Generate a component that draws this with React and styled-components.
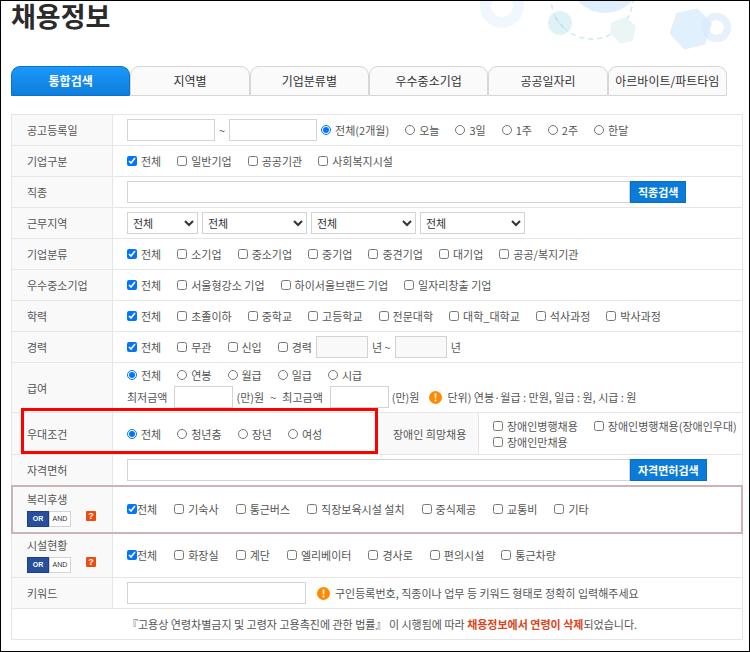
import { useState } from "react";
import styled, { createGlobalStyle, css } from "styled-components";

const GlobalStyle = createGlobalStyle`
  * {
    box-sizing: border-box;
  }
  body {
    margin: 0;
    background: #fff;
  }
  body, input, select, button {
    font-family: "Noto Sans CJK KR", "Noto Sans", sans-serif;
    font-size: 11px;
    line-height: 16px;
    color: #555;
  }
`;

const Page = styled.div`
  position: relative;
  min-height: 100vh;
  padding: 0 6px 10px 10px;
  border: 1px solid #000;
`;

const Decoration = styled.svg`
  position: absolute;
  top: 0;
  right: 0;
  width: 280px;
  height: 56px;
`;

const Title = styled.h1`
  position: relative;
  margin: 0 0 35px;
  font-size: 27px;
  line-height: 30px;
  font-weight: 700;
  color: #2b2b2b;
`;

const Tabs = styled.div`
  display: flex;
  margin: 0 16px 18px 0;
`;

const Tab = styled.button`
  flex: 1 1 0;
  height: 30px;
  padding: 0;
  border: 1px solid #d6d6d6;
  border-radius: 9px 9px 0 0;
  background: #fafafa;
  font-size: 12px;
  white-space: nowrap;
  color: #333;
  cursor: pointer;

  ${({ $active }) =>
    $active &&
    css`
      border-color: #0873cf;
      background: linear-gradient(#1a98fb, #0f7edb);
      font-weight: 700;
      color: #fff;
    `}
`;

const Form = styled.form`
  border: 1px solid #e6e6e6;
  border-bottom: none;
`;

const Row = styled.div`
  display: flex;
  min-height: ${({ $height }) => $height || 31}px;
  border-bottom: 1px solid #e6e6e6;

  ${({ $marked }) =>
    $marked &&
    css`
      outline: 2px solid #cdb3b3;
      outline-offset: -1px;
    `}
`;

const Label = styled.div`
  flex: 0 0 101px;
  display: flex;
  flex-direction: column;
  justify-content: center;
  gap: 4px;
  padding-left: 15px;
  border-right: 1px solid #e6e6e6;
  background: #f9f9f9;
`;

const Cell = styled.div`
  flex: 1;
  display: flex;
  align-items: center;
  gap: ${({ $gap }) => $gap || 0}px;
  padding-left: 14px;
  white-space: nowrap;
`;

const Stack = styled(Cell)`
  flex-direction: column;
  align-items: flex-start;
  justify-content: center;
`;

const Half = styled.div`
  position: relative;
  flex: ${({ $width }) => ($width ? `0 0 ${$width}px` : "1")};
  display: flex;
`;

const RedFrame = styled.div`
  position: absolute;
  inset: -5px 0 0 9px;
  border: 3px solid #fe0000;
  pointer-events: none;
`;

const Options = styled.div`
  display: flex;
  align-items: center;
  gap: ${({ $gap }) => $gap}px;
`;

const Option = styled.label`
  display: flex;
  align-items: center;
  gap: ${({ $tight }) => ($tight ? 0 : 4)}px;
`;

const Check = styled.input`
  width: 10px;
  height: 10px;
  margin: 0;
`;

const Amounts = styled.div`
  display: flex;
  align-items: center;
  gap: 6px;
`;

const Amount = styled.label`
  display: flex;
  align-items: center;
  gap: 7px;
`;

const Unit = styled.span`
  margin-left: -4px;
`;

const TextInput = styled.input`
  width: ${({ $width }) => $width}px;
  height: 22px;
  padding: 0 5px;
  border: 1px solid #d3d3d3;
  border-radius: 0;
  background: #fff;

  &:disabled {
    background: #f9f9f9;
  }
`;

const Select = styled.select`
  width: ${({ $width }) => $width}px;
  height: 22px;
  padding: 0 0 0 1px;
  border: 1px solid #d3d3d3;
  border-radius: 0;
  background: #fff;
  color: #333;
`;

const SearchButton = styled.button`
  height: 22px;
  padding: 0 7px;
  border: 1px solid #0a6fc4;
  background: #0a7bd8;
  font-weight: 700;
  color: #fff;
  cursor: pointer;
`;

const LogicLine = styled.div`
  display: flex;
  gap: 15px;
`;

const Logic = styled.div`
  display: flex;
`;

const LogicButton = styled.button`
  width: 22px;
  height: 16px;
  padding: 0;
  border: 1px solid ${({ $on }) => ($on ? "#1c3f86" : "#d3d3d3")};
  background: ${({ $on }) => ($on ? "#274f9e" : "#fff")};
  font-family: "Liberation Sans", Arial, sans-serif;
  font-size: 7px;
  line-height: 14px;
  font-weight: ${({ $on }) => ($on ? 700 : 400)};
  color: ${({ $on }) => ($on ? "#fff" : "#333")};
`;

const Help = styled.button`
  width: 10px;
  height: 10px;
  padding: 0;
  border: none;
  border-radius: 1px;
  background: #ee4b0d;
  font-family: "Liberation Sans", Arial, sans-serif;
  font-size: 9px;
  line-height: 10px;
  font-weight: 700;
  color: #fff;
`;

const Notice = styled.span`
  display: flex;
  align-items: center;
  gap: 5px;
  margin-left: ${({ $space }) => $space}px;
`;

const Law = styled.p`
  margin: 0;
  padding-left: 101px;
`;

const Strong = styled.strong`
  color: #dc4420;
`;

const AlertIcon = () => (
  <svg width="13" height="13" viewBox="0 0 13 13" aria-hidden="true">
    <circle cx="6.5" cy="6.5" r="6.5" fill="#ff8a00" />
    <path d="M5.5 2.6h2l-.4 4.8h-1.2z" fill="#fff" />
    <circle cx="6.5" cy="9.4" r="1" fill="#fff" />
  </svg>
);

const HeaderArt = () => (
  <Decoration viewBox="469 1 280 56" aria-hidden="true">
    <circle cx="502" cy="6" r="16.5" fill="none" stroke="#f1f7fd" strokeWidth="11" />
    <circle cx="605" cy="-23" r="36" fill="#deeefb" />
    <circle cx="560" cy="23" r="12" fill="#dff3f6" />
    <circle
      cx="592"
      cy="-2"
      r="41"
      fill="none"
      stroke="#cdeaf3"
      strokeWidth="1.5"
      strokeDasharray="5 4"
    />
    <path d="M555 17L566 31" stroke="#c3d9f5" strokeWidth="1.5" strokeDasharray="5 4" />
    <path d="M611 22.5L625.5 17L636 26L632.5 41L620.5 43.5L610 33Z" fill="#eaf6f5" />
    <path d="M676.5 13L697.5 8.5L712 23.5L705 44.5L684.5 49.5L669.5 33.5Z" fill="#e0f0fc" />
    <circle
      cx="716.5"
      cy="27.5"
      r="11"
      fill="none"
      stroke="#d9eafa"
      strokeOpacity="0.65"
      strokeWidth="7.5"
    />
  </Decoration>
);

const TABS = [
  "통합검색",
  "지역별",
  "기업분류별",
  "우수중소기업",
  "공공일자리",
  "아르바이트/파트타임",
];

const Choices = ({ name, type = "checkbox", items, checked = true, tight }) => (
  <Options role="group" aria-label={name} $gap={tight ? 17 : 16}>
    {items.map((item, i) => (
      <Option key={item} $tight={tight && i === 0}>
        <Check type={type} name={name} defaultChecked={checked && i === 0} />
        {item}
      </Option>
    ))}
  </Options>
);

const CheckRow = ({ label, items }) => (
  <Row>
    <Label>{label}</Label>
    <Cell>
      <Choices name={label} items={items} />
    </Cell>
  </Row>
);

const SearchRow = ({ id, label, button }) => (
  <Row>
    <Label as="label" htmlFor={id}>
      {label}
    </Label>
    <Cell>
      <TextInput id={id} $width={503} />
      <SearchButton type="button">{button}</SearchButton>
    </Cell>
  </Row>
);

const LogicRow = ({ label, items, height, marked }) => {
  const [logic, setLogic] = useState("OR");

  return (
    <Row $height={height} $marked={marked}>
      <Label>
        {label}
        <LogicLine>
          <Logic>
            {["OR", "AND"].map((value) => (
              <LogicButton
                key={value}
                type="button"
                $on={logic === value}
                onClick={() => setLogic(value)}
              >
                {value}
              </LogicButton>
            ))}
          </Logic>
          <Help type="button">?</Help>
        </LogicLine>
      </Label>
      <Cell>
        <Choices name={label} items={items} tight />
      </Cell>
    </Row>
  );
};

const App = () => {
  const [tab, setTab] = useState(TABS[0]);

  return (
    <Page>
      <GlobalStyle />
      <HeaderArt />
      <Title>채용정보</Title>
      <Tabs>
        {TABS.map((name) => (
          <Tab key={name} type="button" $active={tab === name} onClick={() => setTab(name)}>
            {name}
          </Tab>
        ))}
      </Tabs>

      <Form onSubmit={(e) => e.preventDefault()}>
        <Row>
          <Label>공고등록일</Label>
          <Cell $gap={4}>
            <TextInput $width={88} aria-label="시작일" />
            ~
            <TextInput $width={88} aria-label="종료일" />
            <Choices
              name="공고등록일"
              type="radio"
              items={["전체(2개월)", "오늘", "3일", "1주", "2주", "한달"]}
            />
          </Cell>
        </Row>

        <CheckRow label="기업구분" items={["전체", "일반기업", "공공기관", "사회복지시설"]} />

        <SearchRow id="job" label="직종" button="직종검색" />

        <Row>
          <Label>근무지역</Label>
          <Cell $gap={4}>
            {[71, 105, 105, 105].map((width, i) => (
              <Select key={i} $width={width} aria-label={`근무지역 ${i + 1}`}>
                <option>전체</option>
              </Select>
            ))}
          </Cell>
        </Row>

        <CheckRow
          label="기업분류"
          items={["전체", "소기업", "중소기업", "중기업", "중견기업", "대기업", "공공/복지기관"]}
        />
        <CheckRow
          label="우수중소기업"
          items={["전체", "서울형강소 기업", "하이서울브랜드 기업", "일자리창출 기업"]}
        />
        <CheckRow
          label="학력"
          items={[
            "전체",
            "초졸이하",
            "중학교",
            "고등학교",
            "전문대학",
            "대학_대학교",
            "석사과정",
            "박사과정",
          ]}
        />

        <Row>
          <Label>경력</Label>
          <Cell $gap={4}>
            <Choices name="경력" items={["전체", "무관", "신입", "경력"]} />
            <TextInput $width={52} disabled aria-label="최소 경력" />
            년 ~
            <TextInput $width={52} disabled aria-label="최대 경력" />
            년
          </Cell>
        </Row>

        <Row $height={50}>
          <Label>급여</Label>
          <Stack $gap={3}>
            <Choices name="급여" type="radio" items={["전체", "연봉", "월급", "일급", "시급"]} />
            <Amounts>
              <Amount>
                최저금액
                <TextInput $width={59} />
                <Unit>(만)원</Unit>
              </Amount>
              ~
              <Amount>
                최고금액
                <TextInput $width={59} />
                <Unit>(만)원</Unit>
              </Amount>
              <Notice $space={4}>
                <AlertIcon />
                단위) 연봉·월급 : 만원, 일급 : 원, 시급 : 원
              </Notice>
            </Amounts>
          </Stack>
        </Row>

        <Row $height={42}>
          <Half>
            <Label>우대조건</Label>
            <Cell>
              <Choices name="우대조건" type="radio" items={["전체", "청년층", "장년", "여성"]} />
            </Cell>
            <RedFrame />
          </Half>
          <Half $width={364}>
            <Label>장애인 희망채용</Label>
            <Stack>
              <Choices
                name="장애인 희망채용"
                items={["장애인병행채용", "장애인병행채용(장애인우대)"]}
                checked={false}
              />
              <Choices name="장애인 희망채용" items={["장애인만채용"]} checked={false} />
            </Stack>
          </Half>
        </Row>

        <SearchRow id="license" label="자격면허" button="자격면허검색" />

        <LogicRow
          label="복리후생"
          height={47}
          marked
          items={[
            "전체",
            "기숙사",
            "통근버스",
            "직장보육시설 설치",
            "중식제공",
            "교통비",
            "기타",
          ]}
        />
        <LogicRow
          label="시설현황"
          height={45}
          items={["전체", "화장실", "계단", "엘리베이터", "경사로", "편의시설", "통근차량"]}
        />

        <Row>
          <Label as="label" htmlFor="keyword">
            키워드
          </Label>
          <Cell>
            <TextInput id="keyword" $width={179} />
            <Notice $space={11}>
              <AlertIcon />
              구인등록번호, 직종이나 업무 등 키워드 형태로 정확히 입력해주세요
            </Notice>
          </Cell>
        </Row>

        <Row>
          <Cell>
            <Law>
              『고용상 연령차별금지 및 고령자 고용촉진에 관한 법률』 이 시행됨에 따라{" "}
              <Strong>채용정보에서 연령이 삭제</Strong>되었습니다.
            </Law>
          </Cell>
        </Row>
      </Form>
    </Page>
  );
};

export default App;
